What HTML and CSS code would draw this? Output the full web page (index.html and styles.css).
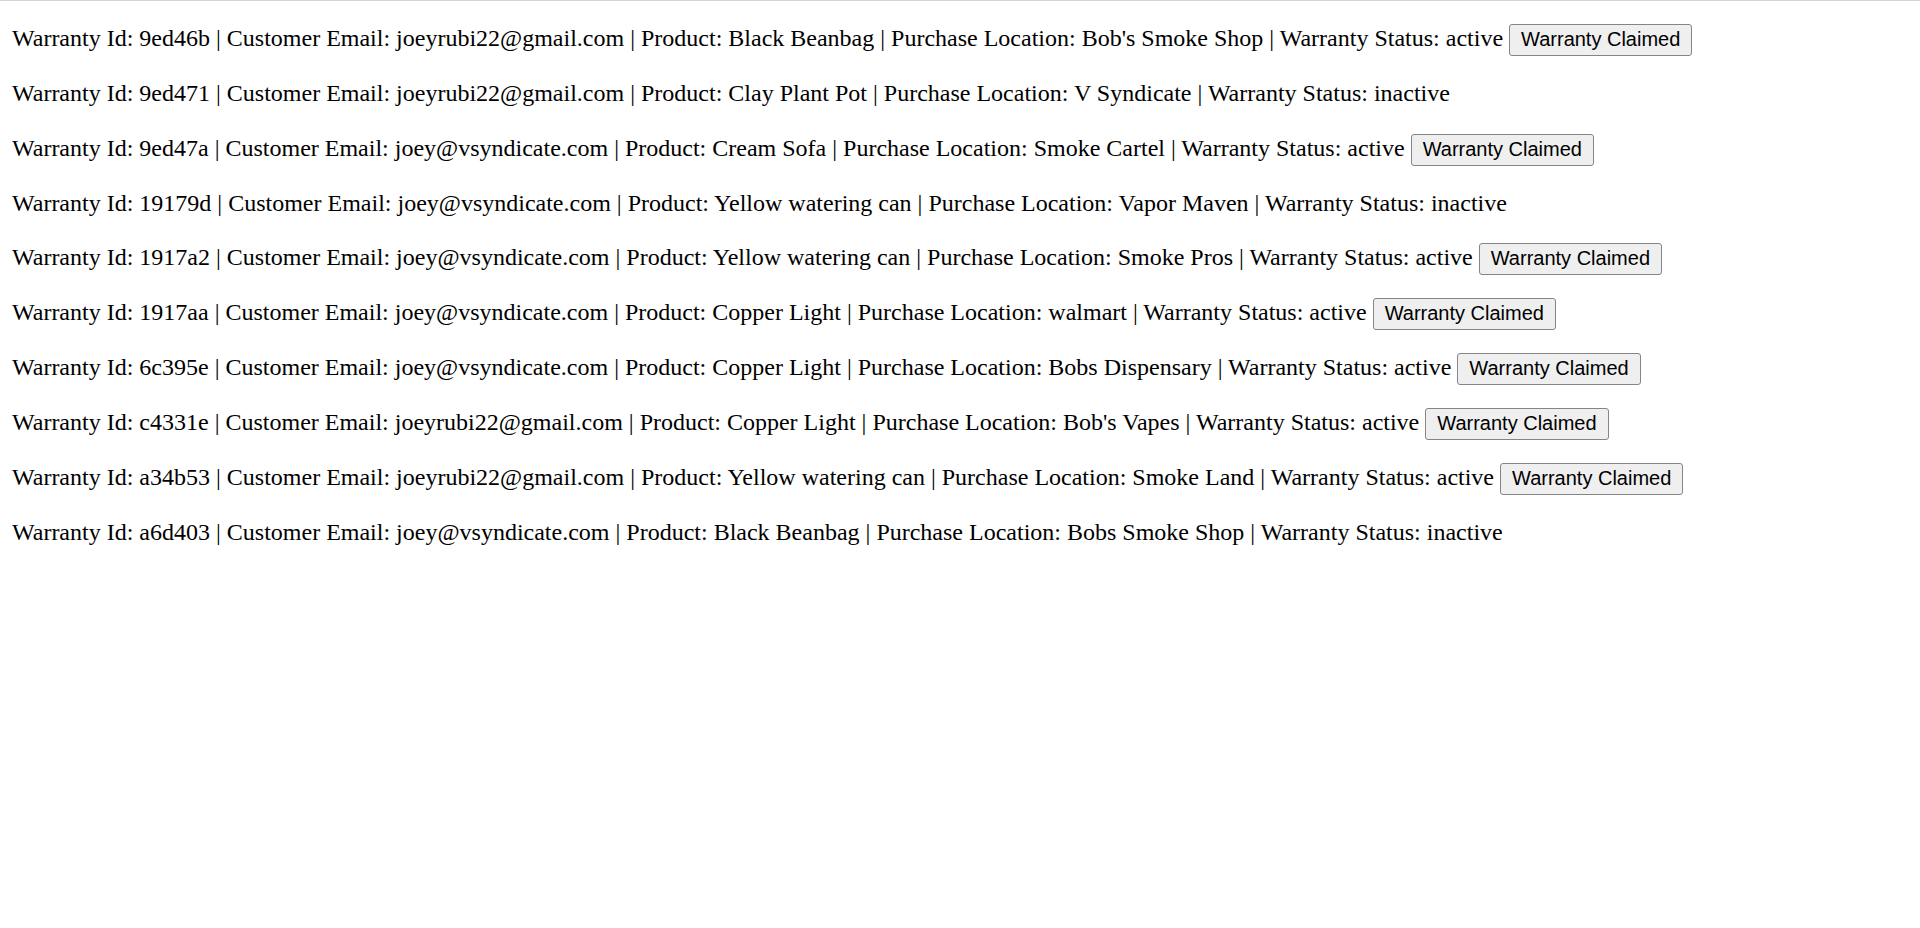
FILE: index.html
```html
<!DOCTYPE html>
<html>
<head>
<meta charset="utf-8">
<title>Warranties</title>
<link rel="stylesheet" href="styles.css">
</head>
<body>
<div class="page">
  <div class="row">Warranty Id: 9ed46b | Customer Email: joeyrubi22@gmail.com | Product: Black Beanbag | Purchase Location: Bob's Smoke Shop | Warranty Status: active <button class="claim">Warranty Claimed</button></div>
  <div class="row">Warranty Id: 9ed471 | Customer Email: joeyrubi22@gmail.com | Product: Clay Plant Pot | Purchase Location: V Syndicate | Warranty Status: inactive</div>
  <div class="row">Warranty Id: 9ed47a | Customer Email: joey@vsyndicate.com | Product: Cream Sofa | Purchase Location: Smoke Cartel | Warranty Status: active <button class="claim">Warranty Claimed</button></div>
  <div class="row">Warranty Id: 19179d | Customer Email: joey@vsyndicate.com | Product: Yellow watering can | Purchase Location: Vapor Maven | Warranty Status: inactive</div>
  <div class="row">Warranty Id: 1917a2 | Customer Email: joey@vsyndicate.com | Product: Yellow watering can | Purchase Location: Smoke Pros | Warranty Status: active <button class="claim">Warranty Claimed</button></div>
  <div class="row">Warranty Id: 1917aa | Customer Email: joey@vsyndicate.com | Product: Copper Light | Purchase Location: walmart | Warranty Status: active <button class="claim">Warranty Claimed</button></div>
  <div class="row">Warranty Id: 6c395e | Customer Email: joey@vsyndicate.com | Product: Copper Light | Purchase Location: Bobs Dispensary | Warranty Status: active <button class="claim">Warranty Claimed</button></div>
  <div class="row">Warranty Id: c4331e | Customer Email: joeyrubi22@gmail.com | Product: Copper Light | Purchase Location: Bob's Vapes | Warranty Status: active <button class="claim">Warranty Claimed</button></div>
  <div class="row">Warranty Id: a34b53 | Customer Email: joeyrubi22@gmail.com | Product: Yellow watering can | Purchase Location: Smoke Land | Warranty Status: active <button class="claim">Warranty Claimed</button></div>
  <div class="row">Warranty Id: a6d403 | Customer Email: joey@vsyndicate.com | Product: Black Beanbag | Purchase Location: Bobs Smoke Shop | Warranty Status: inactive</div>
</div>
</body>
</html>
```
FILE: styles.css
```css
html, body {
  margin: 0;
  padding: 0;
  background: #ffffff;
}

.page {
  border-top: 1px solid #d4d4d4;
  padding: 20px 0 0 12px;
  font-family: "Liberation Serif", "Times New Roman", serif;
  font-size: 24px;
  color: #000000;
  display: flex;
  flex-direction: column;
  gap: 20px;
}

.row {
  height: 34.85px;
  line-height: 34.85px;
  white-space: nowrap;
}

.claim {
  font-family: "Liberation Sans", Arial, sans-serif;
  font-size: 20px;
  line-height: normal;
  color: #000000;
  background: #efefef;
  border: 1px solid #858585;
  border-radius: 3px;
  padding: 3px 11px 4px;
  margin: 0;
  vertical-align: baseline;
}
```
